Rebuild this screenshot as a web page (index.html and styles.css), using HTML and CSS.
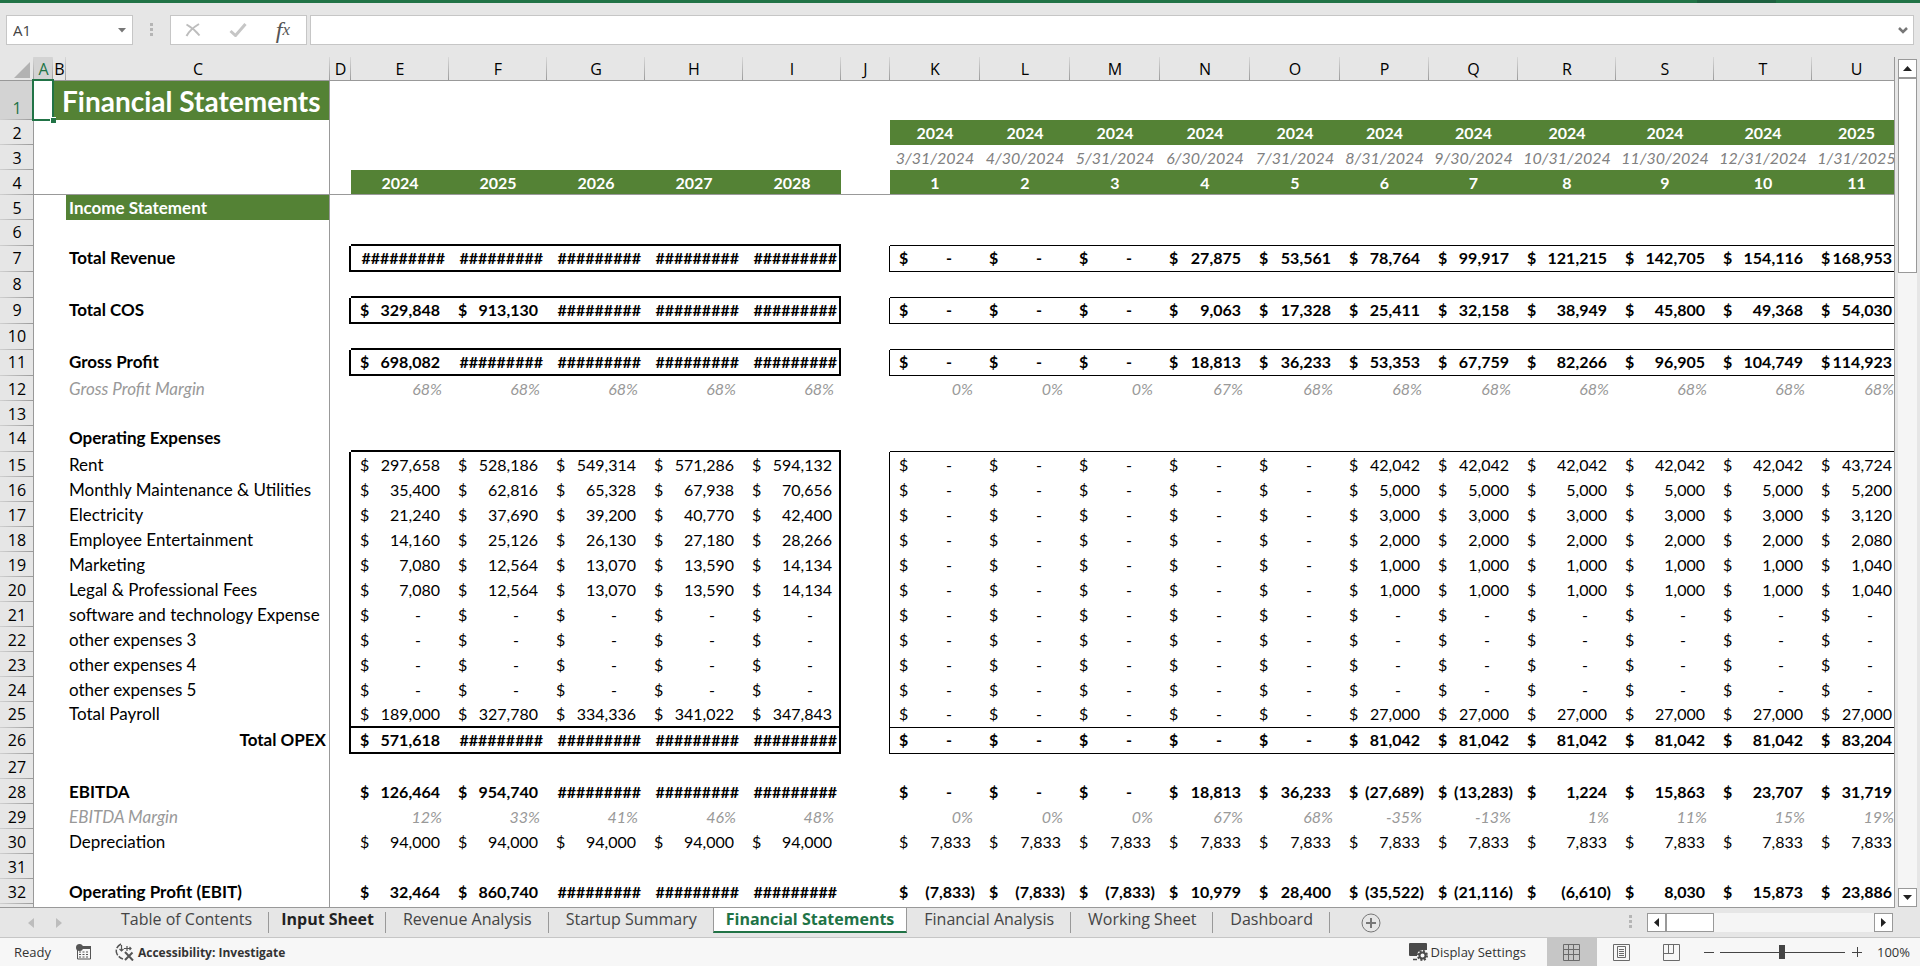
FILE: index.html
```html
<!DOCTYPE html>
<html lang="en">
<head>
<meta charset="utf-8">
<title>Financial Statements</title>
<link rel="stylesheet" href="styles.css">
</head>
<body>
<div class="titlebar"><span class="titlebar-mark"></span></div>

<div class="formula-bar">
  <div class="name-box">
    <input class="name-input" type="text" value="A1" aria-label="Name box">
    <button class="plain" type="button" aria-label="Named ranges"><svg width="8" height="5" viewBox="0 0 8 5"><path d="M0 0h8L4 4.500z" fill="#777"/></svg></button>
  </div>
  <svg class="grip" width="3" height="14" viewBox="0 0 3 14"><path d="M0 0h3v3H0zM0 5h3v3H0zM0 10h3v3H0z" fill="#b5b5b5"/></svg>
  <div class="fx-box">
    <button class="plain" type="button" aria-label="Cancel"><svg width="16" height="14" viewBox="0 0 16 14"><path d="M1.500 1.500C6 4 11 8 14.500 12.500M14 1C9 4 4 8 1.500 13" fill="none" stroke="#bdbdbd" stroke-width="2"/></svg></button>
    <button class="plain" type="button" aria-label="Enter"><svg width="18" height="14" viewBox="0 0 18 14"><path d="M1.500 8l5 4.500L16.500 1" fill="none" stroke="#c6c6c6" stroke-width="3"/></svg></button>
    <button class="plain fx" type="button" aria-label="Insert function"><i>f</i><i class="fx-x">x</i></button>
  </div>
  <div class="formula-box">
    <input class="formula-input" type="text" aria-label="Formula">
    <button class="plain" type="button" aria-label="Expand formula bar"><svg width="10" height="7" viewBox="0 0 10 7"><path d="M1 1l4 4 4-4" fill="none" stroke="#777" stroke-width="2.500"/></svg></button>
  </div>
</div>

<main class="workspace">
  <div class="sheet">
    <table class="grid" id="grid"></table>
  </div>
  <div class="vscroll">
    <button class="scroll-btn" type="button" aria-label="Scroll up"><svg width="9" height="5" viewBox="0 0 9 5"><path d="M0 5h9L4.500 0z" fill="#222"/></svg></button>
    <div class="vthumb"></div>
    <div class="track"></div>
    <button class="scroll-btn" type="button" aria-label="Scroll down"><svg width="9" height="5" viewBox="0 0 9 5"><path d="M0 0h9L4.500 5z" fill="#222"/></svg></button>
  </div>
</main>

<nav class="tabs" aria-label="Sheets">
  <div class="tab-nav">
    <button class="plain" type="button" aria-label="Previous sheets"><svg width="6" height="10" viewBox="0 0 6 10"><path d="M6 0v10L0 5z" fill="#bdbdbd"/></svg></button>
    <button class="plain" type="button" aria-label="Next sheets"><svg width="6" height="10" viewBox="0 0 6 10"><path d="M0 0v10l6-5z" fill="#bdbdbd"/></svg></button>
  </div>
  <button class="tab" type="button">Table of Contents</button>
  <button class="tab tab-strong" type="button">Input Sheet</button>
  <button class="tab" type="button">Revenue Analysis</button>
  <button class="tab" type="button">Startup Summary</button>
  <button class="tab tab-active" type="button">Financial Statements</button>
  <button class="tab" type="button">Financial Analysis</button>
  <button class="tab" type="button">Working Sheet</button>
  <button class="tab" type="button">Dashboard</button>
  <button class="plain add" type="button" aria-label="New sheet"><svg width="20" height="20" viewBox="0 0 20 20"><circle cx="10" cy="10" r="9" fill="none" stroke="#777"/><path d="M10 5v10M5 10h10" stroke="#777" stroke-width="2"/></svg></button>
  <svg class="grip tab-grip" width="3" height="14" viewBox="0 0 3 14"><path d="M0 0h3v3H0zM0 5h3v3H0zM0 10h3v3H0z" fill="#b5b5b5"/></svg>
  <div class="hscroll">
    <button class="scroll-btn" type="button" aria-label="Scroll left"><svg width="5" height="9" viewBox="0 0 5 9"><path d="M5 0v9L0 4.500z" fill="#222"/></svg></button>
    <div class="hthumb"></div>
    <div class="track"></div>
    <button class="scroll-btn" type="button" aria-label="Scroll right"><svg width="5" height="9" viewBox="0 0 5 9"><path d="M0 0v9l5-4.500z" fill="#222"/></svg></button>
  </div>
</nav>

<footer class="status">
  <span class="ready">Ready</span>
  <button class="plain" type="button" aria-label="Record macro"><svg width="16" height="16" viewBox="0 0 16 16"><path d="M1.500 5v10h13V2.500H7" fill="none" stroke="#555"/><path d="M6 2h9v3H6z" fill="#555"/><circle cx="3.500" cy="3.500" r="3.500" fill="#555"/><path d="M3 8h10M3 10.500h10M3 13h10" stroke="#555" stroke-dasharray="2 1.500"/></svg></button>
  <button class="plain access" type="button"><svg width="20" height="18" viewBox="0 0 20 18"><path d="M6 1C2 3 0 7 2 11c1 2 3 4 6 5" fill="none" stroke="#555" stroke-width="1.500" stroke-dasharray="6 1.500"/><path d="M6.500 2v6M4.500 6l2 2 2-2M9 5.500h7M12 3v5M14.500 4l1.500 1.500L14.500 7" fill="none" stroke="#555" stroke-width="1.200"/><path d="M10 9l8 8.500M17.500 9.500L10 17" stroke="#555" stroke-width="2"/></svg><span>Accessibility: Investigate</span></button>
  <div class="status-right">
    <button class="plain display" type="button"><svg width="19" height="18" viewBox="0 0 19 18"><path d="M1 0h16q1 0 1 1v6h-3l-7 6H1q-1 0-1-1V1q0-1 1-1z" fill="#4a4a4a"/><path d="M4 16.500h4" stroke="#4a4a4a" stroke-width="1.500"/><circle cx="13.500" cy="12.500" r="5.500" fill="#f7f7f7"/><circle cx="13.500" cy="12.500" r="3" fill="none" stroke="#4a4a4a" stroke-width="2"/><circle cx="13.500" cy="12.500" r="4.500" fill="none" stroke="#4a4a4a" stroke-width="2" stroke-dasharray="2 1.530"/></svg><span>Display Settings</span></button>
    <button class="plain view view-on" type="button" aria-label="Normal view"><svg width="17" height="17" viewBox="0 0 17 17"><path d="M.5.5h16v16H.5zM.5 5.500h16M.5 10.500h16M5.500.5v16M10.500.5v16" fill="none" stroke="#6a6a6a"/></svg></button>
    <button class="plain view" type="button" aria-label="Page layout view"><svg width="17" height="17" viewBox="0 0 17 17"><path d="M.5.5h16v16H.5zM4.500 2.500h8v11h-8zM6 5.500h5M6 7.500h5M6 9.500h5M6 11.500h5" fill="none" stroke="#6a6a6a"/></svg></button>
    <button class="plain view" type="button" aria-label="Page break view"><svg width="17" height="17" viewBox="0 0 17 17"><path d="M.5.5h16v16H.5zM.5 9.500h10V.5M5.500.5v9" fill="none" stroke="#6a6a6a"/></svg></button>
    <button class="plain step" type="button" aria-label="Zoom out"><svg width="10" height="10" viewBox="0 0 10 10"><path d="M0 5.500h10" stroke="#444"/></svg></button>
    <input class="zoom" type="range" min="0" max="100" value="50" aria-label="Zoom">
    <button class="plain step" type="button" aria-label="Zoom in"><svg width="10" height="10" viewBox="0 0 10 10"><path d="M0 5.500h10M5.500 0v10" stroke="#444"/></svg></button>
    <span class="percent">100%</span>
  </div>
</footer>
<script src="app.js"></script>
</body>
</html>
```
FILE: styles.css
```css
* { box-sizing: border-box; }

body {
  margin: 0;
  height: 100vh;
  display: flex;
  flex-direction: column;
  overflow: hidden;
  background: #e6e6e6;
  color: #000;
  font-family: "Open Sans", sans-serif;
  font-size: 16px;
}

button, input { font: inherit; color: inherit; }
svg { display: block; flex: none; }

.plain {
  display: flex;
  align-items: center;
  justify-content: center;
  padding: 0;
  border: 0;
  background: none;
}

.titlebar {
  flex: none;
  display: flex;
  justify-content: flex-end;
  height: 3px;
  padding-right: 144px;
  background: #217346;
}
.titlebar-mark { width: 79px; background: #1e6140; }

/* Formula bar */
.formula-bar {
  flex: none;
  display: flex;
  align-items: center;
  height: 54px;
  padding: 0 6px;
}
.name-box, .fx-box, .formula-box {
  display: flex;
  align-items: center;
  height: 30px;
  border: 1px solid #c6c6c6;
  background: #fff;
}
.name-box { width: 127px; padding: 0 6px; }
.name-input, .formula-input {
  flex: 1;
  min-width: 0;
  padding: 0;
  border: 0;
  outline: 0;
  background: none;
  color: #444;
  font-size: 15px;
}
.grip { margin: 0 17px; }
.fx-box { width: 137px; justify-content: space-between; padding: 0 16px 0 14px; }
.fx { color: #555; font-family: "Liberation Serif", serif; font-size: 24px; line-height: 24px; }
.fx-x { font-size: 17px; }
.formula-box { flex: 1; margin-left: 3px; padding: 0 5px; }

/* Sheet */
.workspace {
  flex: 1;
  min-height: 0;
  display: flex;
}
.sheet {
  flex: 1;
  min-width: 0;
  overflow: hidden;
  border-right: 1px solid #999;
  border-bottom: 1px solid #999;
  background: #fff;
}
.grid {
  width: 1901px;
  table-layout: fixed;
  border-spacing: 0;
  font-family: Lato, sans-serif;
  line-height: 24px;
}
.grid th, .grid td {
  height: 25px;
  padding: 0;
  vertical-align: bottom;
  white-space: nowrap;
  text-align: left;
}
.grid .tall > * { height: 26px; padding-bottom: 2px; }
.grid .title-row > * { height: 39px; }

.grid th {
  font-family: "Open Sans", sans-serif;
  font-weight: 400;
  text-align: center;
}
.grid .col-head {
  height: 24px;
  line-height: 23px;
  background:
    linear-gradient(#999, #999) bottom / 100% 1px no-repeat,
    linear-gradient(#d8d8d8, #999) right / 1px 100% no-repeat,
    #e6e6e6;
}
.grid .row-head {
  background:
    linear-gradient(#999, #999) right / 1px 100% no-repeat,
    linear-gradient(90deg, #d0d0d0, #999) bottom / 100% 1px no-repeat,
    #e6e6e6;
}
.grid .picked { background-color: #d3d3d3; color: #217346; }
.grid .corner { padding: 0 3px 3px 14px; vertical-align: bottom; }

.grid .freeze-x { border-right: 1px solid #999; }
.grid .freeze-y td { box-shadow: inset 0 -1px #999; }

.grid .label { padding-left: 3px; font-size: 17px; }
.grid .right { padding-right: 3px; text-align: right; }
.grid .bold { font-weight: 700; }
.grid .soft { color: #999; font-style: italic; }
.grid .fill { background: #548235; color: #fff; font-weight: 700; }
.grid .center { text-align: center; }
.grid .date { color: #808080; font-style: italic; text-align: center; }
.grid .rate { padding-right: 7px; text-align: right; }
.grid .hash { padding-right: 4px; text-align: right; }
.grid .title { padding-left: 9px; font-size: 28px; line-height: 38px; }

.grid .b1 { box-shadow: inset 0 -1px #000; }
.grid .b2 { box-shadow: inset 0 -2px #000; }
.grid .r1 { box-shadow: inset -1px 0 #000; }
.grid .r2 { box-shadow: inset -2px 0 #000; }
.grid .b2.r2 { box-shadow: inset -2px -2px #000; }

.money {
  display: flex;
  justify-content: space-between;
  padding: 0 9px;
}
.money.negative { padding-right: 5px; }
.money.nil { padding-right: 28px; }

.grid .cursor { position: relative; }
.cursor-box {
  position: absolute;
  inset: -2px -1px -1px -2px;
  border: 2px solid #217346;
}
.cursor-box::after {
  content: "";
  position: absolute;
  right: -4px;
  bottom: -4px;
  width: 5px;
  height: 5px;
  border: solid #fff;
  border-width: 1px 0 0 1px;
  box-sizing: content-box;
  background: #217346;
}

/* Scroll bars */
.vscroll {
  display: flex;
  flex-direction: column;
  width: 25px;
  padding: 2px 3px 1px 3px;
}
.scroll-btn {
  flex: none;
  display: flex;
  align-items: center;
  justify-content: center;
  width: 19px;
  height: 19px;
  padding: 0;
  border: 1px solid #999;
  background: #fff;
}
.vthumb { flex: none; height: 195px; border: 1px solid #999; background: #fff; }
.hthumb { flex: none; width: 48px; border: 1px solid #999; background: #fff; }
.track { flex: 1; background: #f5f5f5; }

/* Sheet tabs */
.tabs {
  flex: none;
  display: flex;
  height: 30px;
  border-bottom: 1px solid #c6c6c6;
  color: #444;
}
.tab-nav {
  display: flex;
  align-items: center;
  gap: 22px;
  width: 104px;
  padding-left: 28px;
}
.tab {
  height: 25px;
  padding: 0 17px;
  border: 0;
  background: linear-gradient(#999, #999) right bottom / 1px 21px no-repeat;
  line-height: 22px;
  white-space: nowrap;
  display: flex;
}
.tab-strong { padding: 0 12px; color: #222; font-weight: 700; }
.tab-active {
  margin-left: -1px;
  padding: 0 12px;
  border: 1px solid #999;
  border-width: 0 1px 2px 1px;
  border-bottom-color: #217346;
  background: #fff;
  color: #217346;
  font-weight: 700;
}
.add { margin-left: 31px; }
.tab-grip { margin: 7px 15px 0 auto; }
.hscroll {
  display: flex;
  width: 246px;
  margin: 5px 27px 5px 0;
}

/* Status bar */
.status {
  flex: none;
  display: flex;
  align-items: center;
  height: 28px;
  padding: 0 10px 0 14px;
  background: #f7f7f7;
  color: #333;
  font-size: 13px;
}
.ready { width: 62px; }
.access { gap: 3px; margin-left: 23px; font-size: 12px; font-weight: 700; }
.status-right { display: flex; align-items: center; height: 100%; margin-left: auto; }
.display { gap: 2px; margin-right: 21px; }
.view { width: 50px; height: 100%; }
.view-on { background: #c6c6c6; }
.step { width: 10px; height: 20px; margin-left: 7px; }
.zoom {
  appearance: none;
  width: 125px;
  height: 14px;
  margin: 0 0 0 6px;
  background: linear-gradient(#444, #444) center / 100% 1px no-repeat;
}
.zoom::-webkit-slider-thumb {
  appearance: none;
  width: 6px;
  height: 14px;
  background: #444;
}
.percent { margin-left: 15px; }
```
FILE: app.js
```javascript
const columns = [
  ["A", 19], ["B", 13], ["C", 264], ["D", 21],
  ["E", 98], ["F", 98], ["G", 98], ["H", 98], ["I", 98], ["J", 49],
  ["K", 90], ["L", 90], ["M", 90], ["N", 90], ["O", 90],
  ["P", 89], ["Q", 89], ["R", 98], ["S", 98], ["T", 98], ["U", 89]
];
const YEARS = 4;
const MONTHS = 10;

const same = (value, count) => Array(count).fill(value);
const nil = same("-", 11);
const hidden = "#########";

/* Each row: label, label style, five yearly values, eleven monthly values. */
const rows = {
  2: { months: [...same("2024", 10), "2025"], head: true },
  3: { months: ["3/31/2024", "4/30/2024", "5/31/2024", "6/30/2024", "7/31/2024", "8/31/2024", "9/30/2024", "10/31/2024", "11/30/2024", "12/31/2024", "1/31/2025"], date: true },
  4: { years: ["2024", "2025", "2026", "2027", "2028"], months: ["1", "2", "3", "4", "5", "6", "7", "8", "9", "10", "11"], head: true },
  5: { label: "Income Statement", style: "fill" },
  7: { label: "Total Revenue", style: "bold", years: same(hidden, 5), months: ["-", "-", "-", "27,875", "53,561", "78,764", "99,917", "121,215", "142,705", "154,116", "168,953"] },
  9: { label: "Total COS", style: "bold", years: ["329,848", "913,130", hidden, hidden, hidden], months: ["-", "-", "-", "9,063", "17,328", "25,411", "32,158", "38,949", "45,800", "49,368", "54,030"] },
  11: { label: "Gross Profit", style: "bold", years: ["698,082", hidden, hidden, hidden, hidden], months: ["-", "-", "-", "18,813", "36,233", "53,353", "67,759", "82,266", "96,905", "104,749", "114,923"] },
  12: { label: "Gross Profit Margin", style: "soft", years: same("68%", 5), months: ["0%", "0%", "0%", "67%", ...same("68%", 7)] },
  14: { label: "Operating Expenses", style: "bold" },
  15: { label: "Rent", years: ["297,658", "528,186", "549,314", "571,286", "594,132"], months: [...same("-", 5), ...same("42,042", 5), "43,724"] },
  16: { label: "Monthly Maintenance & Utilities", years: ["35,400", "62,816", "65,328", "67,938", "70,656"], months: [...same("-", 5), ...same("5,000", 5), "5,200"] },
  17: { label: "Electricity", years: ["21,240", "37,690", "39,200", "40,770", "42,400"], months: [...same("-", 5), ...same("3,000", 5), "3,120"] },
  18: { label: "Employee Entertainment", years: ["14,160", "25,126", "26,130", "27,180", "28,266"], months: [...same("-", 5), ...same("2,000", 5), "2,080"] },
  19: { label: "Marketing", years: ["7,080", "12,564", "13,070", "13,590", "14,134"], months: [...same("-", 5), ...same("1,000", 5), "1,040"] },
  20: { label: "Legal & Professional Fees", years: ["7,080", "12,564", "13,070", "13,590", "14,134"], months: [...same("-", 5), ...same("1,000", 5), "1,040"] },
  21: { label: "software and technology Expense", years: same("-", 5), months: nil },
  22: { label: "other expenses 3", years: same("-", 5), months: nil },
  23: { label: "other expenses 4", years: same("-", 5), months: nil },
  24: { label: "other expenses 5", years: same("-", 5), months: nil },
  25: { label: "Total Payroll", years: ["189,000", "327,780", "334,336", "341,022", "347,843"], months: [...same("-", 5), ...same("27,000", 6)] },
  26: { label: "Total OPEX", style: "bold right", years: ["571,618", hidden, hidden, hidden, hidden], months: [...same("-", 5), ...same("81,042", 5), "83,204"] },
  28: { label: "EBITDA", style: "bold", years: ["126,464", "954,740", hidden, hidden, hidden], months: ["-", "-", "-", "18,813", "36,233", "(27,689)", "(13,283)", "1,224", "15,863", "23,707", "31,719"] },
  29: { label: "EBITDA Margin", style: "soft", years: ["12%", "33%", "41%", "46%", "48%"], months: ["0%", "0%", "0%", "67%", "68%", "-35%", "-13%", "1%", "11%", "15%", "19%"] },
  30: { label: "Depreciation", years: same("94,000", 5), months: same("7,833", 11) },
  32: { label: "Operating Profit (EBIT)", style: "bold", years: ["32,464", "860,740", hidden, hidden, hidden], months: ["(7,833)", "(7,833)", "(7,833)", "10,979", "28,400", "(35,522)", "(21,116)", "(6,610)", "8,030", "15,873", "23,886"] }
};

const tallRows = [6, 7, 8, 9, 10, 11, 14, 25, 26];
const boxed = row => [7, 9, 11].includes(row) || (row >= 15 && row <= 26);

function make(tag, className, text) {
  const node = document.createElement(tag);
  if (className) node.className = className;
  if (text !== undefined) node.textContent = text;
  return node;
}

function fillCell(cell, value, row) {
  if (row.head) {
    cell.classList.add("fill", "center");
    cell.textContent = value;
  } else if (row.date) {
    cell.classList.add("date");
    cell.textContent = value;
  } else if (value.startsWith("#")) {
    cell.classList.add("hash");
    cell.textContent = value;
  } else if (value.endsWith("%")) {
    cell.classList.add("rate");
    cell.textContent = value;
  } else {
    const kind = value === "-" ? " nil" : value.startsWith("(") ? " negative" : "";
    const money = make("div", "money" + kind);
    money.append(make("span", "", "$"), make("span", "", value));
    cell.append(money);
  }
}

const grid = document.getElementById("grid");

const group = make("colgroup");
[["", 34], ...columns].forEach(([, width]) => {
  const col = make("col");
  col.style.width = width + "px";
  group.append(col);
});
grid.append(group);

const head = make("tr");
const corner = make("th", "col-head corner");
corner.innerHTML = '<svg width="16" height="16" viewBox="0 0 16 16"><path d="M16 0v16H0z" fill="#b2b2b2"/></svg>';
head.append(corner);
columns.forEach(([name]) => head.append(make("th", "col-head" + (name === "A" ? " picked" : ""), name)));
grid.append(head);

for (let number = 1; number <= 33; number++) {
  const row = rows[number] || {};
  const tr = make("tr");
  if (tallRows.includes(number)) tr.classList.add("tall");
  if (number === 1) tr.classList.add("title-row");
  if (number === 4) tr.classList.add("freeze-y");
  tr.append(make("th", "row-head" + (number === 1 ? " picked" : ""), number));

  columns.forEach(([name], index) => {
    if (number === 1 && name === "C") return;
    const cell = make("td");
    const year = index - YEARS;
    const month = index - MONTHS;

    if (number === 1 && name === "A") {
      cell.className = "cursor";
      cell.append(make("div", "cursor-box"));
    }
    if (number === 1 && name === "B") {
      cell.colSpan = 2;
      cell.className = "fill title freeze-x";
      cell.textContent = "Financial Statements";
    }
    if (name === "C") {
      cell.className = "label freeze-x " + (row.style || "");
      cell.textContent = row.label || "";
    }
    if (year >= 0 && year < 5 || month >= 0) {
      const value = month >= 0 ? row.months?.[month] : row.years?.[year];
      if (row.style) cell.classList.add(...row.style.replace("right", "").trim().split(" "));
      if (number === 5) cell.classList.remove("fill");
      if (value) fillCell(cell, value, row);
      if (tallRows.includes(number)) cell.classList.add(month >= 0 ? "b1" : "b2");
    }
    if (boxed(number)) {
      if (name === "D" || name === "I") cell.classList.add("r2");
      if (name === "J") cell.classList.add("r1");
    }
    tr.append(cell);
  });
  grid.append(tr);
}
```
